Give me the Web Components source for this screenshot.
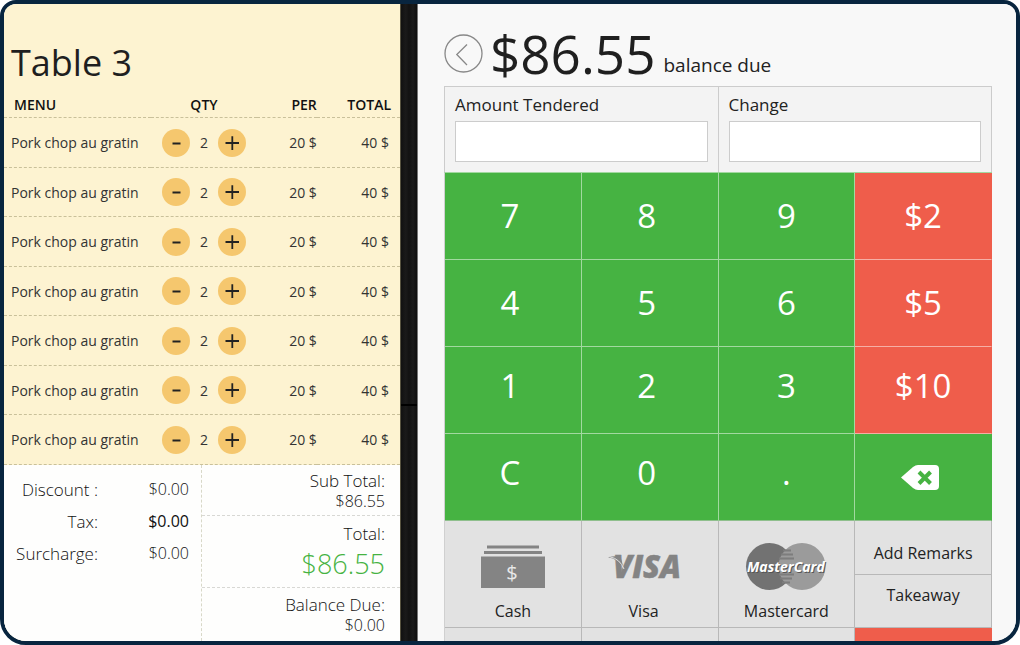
<!DOCTYPE html>
<html lang="en">
<head>
<meta charset="utf-8">
<meta name="viewport" content="width=device-width, initial-scale=1">
<title>Table 3 - Payment</title>
<style>
  body { margin: 0; background: #fff; font-family: "Open Sans", "Noto Sans", sans-serif; color: #222; }
</style>
</head>
<body>
<pos-screen>
  <order-bill slot="bill" heading="Table 3" lines="7"></order-bill>
  <payment-pane slot="payment"></payment-pane>
</pos-screen>

<script>
const define = (name, html, setup) => {
  const template = document.createElement('template');
  template.innerHTML = html;
  customElements.define(name, class extends HTMLElement {
    constructor() {
      super();
      this.attachShadow({ mode: 'open' }).append(template.content.cloneNode(true));
    }
    connectedCallback() { if (setup) setup(this, this.shadowRoot); }
  });
};

/* Device frame: bill, binding, payment */
define('pos-screen', `
<style>
  :host { display: grid; grid-template-columns: minmax(0, 396fr) 18px minmax(0, 598fr); min-height: 100vh;
    box-sizing: border-box; border: 4px solid #08253f; border-radius: 16px 16px 26px 26px; overflow: hidden; background: #f8f8f8; }
  .binding { box-sizing: border-box; border-left: 1px solid #56523f; border-right: 1px solid #777;
    background: linear-gradient(#000, #000) 0 63% / 100% 2px no-repeat, linear-gradient(90deg, #111, #1a1a1a 30%, #121212 50%, #1b1b1b 75%, #0e0e0e); }
</style>
<slot name="bill"></slot>
<div class="binding"></div>
<slot name="payment"></slot>`);

/* Round plus / minus stepper */
define('qty-stepper', `
<style>
  :host { display: flex; justify-content: center; align-items: center; gap: 8px; }
  button { width: 28px; height: 28px; padding: 0; border: 0; border-radius: 50%; background: #f5c76e; display: grid; place-items: center; }
  span { width: 12px; text-align: center; }
</style>
<button aria-label="Decrease"><svg width="16" height="16" viewBox="0 0 16 16"><path d="M4.500 8.500h8" stroke="#222" stroke-width="2"/></svg></button>
<span><slot></slot></span>
<button aria-label="Increase"><svg width="16" height="16" viewBox="0 0 16 16"><path d="M1.500 8H15M8.300 1.200V15" stroke="#222" stroke-width="1.800"/></svg></button>`);

define('bill-amount', `
<style>
  :host { display: block; box-sizing: border-box; padding: 5px 15px 3px 0; text-align: right; font-size: 17px; line-height: 21px; font-weight: 300; color: #111; border-bottom: 1px dashed #d8d8d4; }
  :host([last]) { border-bottom: 0; padding-top: 6px; }
  :host([grand]) { padding-top: 7px; }
  .value { font-size: 16px; }
  :host([grand]) .value { font-size: 27px; line-height: 40px; color: #46b342; }
</style>
<div><slot></slot></div>
<div class="value"><slot name="value"></slot></div>`);

define('order-bill', `
<style>
  :host { display: flex; flex-direction: column; background: #fdf3d1; }
  h1 { margin: 0; padding: 30px 0 0 7px; font-size: 36px; line-height: 57px; font-weight: 400; color: #1f1f1f; }
  table { width: 100%; border-collapse: separate; border-spacing: 0; table-layout: fixed; font-size: 14px; color: #333; }
  th, td { box-sizing: border-box; padding: 0; border-bottom: 1px dashed #c9c09a; text-align: right; }
  th { height: 27px; font-weight: 600; color: #111; }
  td { height: 49px; }
  tr:nth-child(odd) td { height: 50px; }
  th:first-child { text-align: left; padding-left: 10px; }
  td:first-child { text-align: left; padding-left: 7px; }
  th:nth-child(2) { text-align: center; }
  th:last-child { padding-right: 9px; }
  td:last-child { padding-right: 11px; }
  .name { width: 37%; } .qty { width: 27%; } .per { width: 15%; }
  .summary { flex: 1; display: grid; grid-template-columns: minmax(0, 1fr) minmax(0, 1fr); background: #fefefd; }
  dl { margin: 0; padding: 8px 12px 0 0; display: grid; grid-template-columns: 94px 1fr; grid-auto-rows: 32px; align-items: center; text-align: right; font-size: 17px; font-weight: 300; color: #111; border-right: 1px dashed #d8d8c8; }
  dd { margin: 0; font-size: 16px; }
  .set { font-weight: 400; }
</style>
<h1></h1>
<table>
  <colgroup><col class="name"><col class="qty"><col class="per"><col></colgroup>
  <thead><tr><th>MENU</th><th>QTY</th><th>PER</th><th>TOTAL</th></tr></thead>
  <tbody></tbody>
</table>
<div class="summary">
  <dl>
    <dt>Discount :</dt><dd>$0.00</dd>
    <dt>Tax:</dt><dd class="set">$0.00</dd>
    <dt>Surcharge:</dt><dd>$0.00</dd>
  </dl>
  <div>
    <bill-amount>Sub Total:<span slot="value">$86.55</span></bill-amount>
    <bill-amount grand>Total:<span slot="value">$86.55</span></bill-amount>
    <bill-amount last>Balance Due:<span slot="value">$0.00</span></bill-amount>
  </div>
</div>`, (host, root) => {
  root.querySelector('h1').textContent = host.getAttribute('heading');
  const row = '<tr><td>Pork chop au gratin</td><td><qty-stepper>2</qty-stepper></td><td>20 $</td><td>40 $</td></tr>';
  root.querySelector('tbody').innerHTML = row.repeat(Number(host.getAttribute('lines')));
});

define('tender-field', `
<style>
  :host { display: block; padding: 7px 10px 10px; border-right: 1px solid #ccc; }
  label { display: block; font-size: 17px; line-height: 22px; }
  input { display: block; box-sizing: border-box; width: 100%; height: 41px; margin-top: 5px; padding: 0 10px; border: 1px solid #ccc; border-radius: 0; background: #fff; font: inherit; font-size: 17px; }
</style>
<label for="amount"></label><input id="amount" type="text">`, (host, root) => {
  root.querySelector('label').textContent = host.getAttribute('label');
});

define('pad-key', `
<style>
  :host { display: block; }
  button { box-sizing: border-box; width: 100%; height: 100%; padding: 0 var(--pull, 0) var(--lift, 0) 0; border: 0; border-right: 1px solid #a2d9a0; border-bottom: 1px solid #a2d9a0;
    background: #46b342; color: #fff; font: inherit; font-size: 33px; line-height: 44px; display: flex; justify-content: center; align-items: center; }
  :host([cash]) button { background: #ef5d4b; border-right-color: #ef5d4b; border-bottom-color: #f6aea5; }
  :host([edge]) button { border-right-color: #46b342; }
  :host([foot]) button { border-bottom-color: #8fbf8d; }
</style>
<button><slot></slot></button>`);

define('pay-option', `
<style>
  :host { display: block; }
  button { box-sizing: border-box; width: 100%; height: 100%; padding: 19px var(--pull, 0) 5px 0; border: 0; border-right: 1px solid #b8b8b8; border-bottom: 1px solid #b8b8b8;
    background: #e2e2e2; color: #222; font: inherit; font-size: 16px; line-height: 22px; display: flex; flex-direction: column; justify-content: space-between; align-items: center; }
  ::slotted(svg) { display: block; height: 52px; }
</style>
<button><slot name="logo"></slot><span><slot></slot></span></button>`);

define('payment-pane', `
<style>
  :host { display: flex; flex-direction: column; padding: 0 24px 0 26px; background: #f8f8f8; }
  header { display: flex; align-items: center; gap: 7px; height: 82px; padding-top: 17px; box-sizing: border-box; }
  .back { width: 39px; height: 39px; padding: 0; border: 0; background: none; }
  .back svg { display: block; }
  .due { margin: 0; display: flex; align-items: flex-end; gap: 8px; font-size: 19px; line-height: 50px; font-weight: 400; color: #222; }
  .due strong { font-size: 53px; line-height: 72px; font-weight: 400; color: #1f1f1f; }
  .tender { display: grid; grid-template-columns: 1fr 1fr; height: 87px; box-sizing: border-box; border: 1px solid #ccc; border-right: 0; border-bottom-color: #a2d9a0; background: #f3f3f3; }
  .keys, .pay, .more { display: grid; grid-template-columns: repeat(4, minmax(0, 1fr)); border-left: 1px solid #d0d0d0; }
  .keys { grid-auto-rows: 87px; }
  .pay { grid-auto-rows: 107px; }
  .keys > :nth-child(4n+1), .keys > :nth-child(4n+2) { --pull: 6px; }
  .pay > :nth-child(2) { --pull: 12px; }
  .keys > [edge] { --pull: 6px; }
  .keys > :nth-child(n+9):not([edge]) { --lift: 8px; }
  .notes { display: grid; grid-template-rows: 1fr 1fr; }
  .notes button { border: 0; border-right: 1px solid #b8b8b8; border-bottom: 1px solid #b8b8b8; background: #e2e2e2; padding: 0; color: #222; font: inherit; font-size: 16px; }
  .notes button:first-child { padding-top: 12px; }
  .notes button:last-child { padding-bottom: 12px; }
  .more { flex: 1; }
  .more div { background: #e2e2e2; border-right: 1px solid #b8b8b8; }
  .more div:last-child { background: #ef5d4b; border-right-color: #ef5d4b; }
</style>
<header>
  <button class="back" aria-label="Back"><svg width="39" height="39" viewBox="0 0 39 39" fill="none" stroke="#888"><circle cx="19.500" cy="19.500" r="18.500" stroke-width="1.300"/><path d="M23 10.500 12.800 20.500 23 31" stroke-width="1.300"/></svg></button>
  <p class="due"><strong>$86.55</strong><span>balance due</span></p>
</header>
<div class="tender">
  <tender-field label="Amount Tendered"></tender-field>
  <tender-field label="Change"></tender-field>
</div>
<div class="keys">
  <pad-key>7</pad-key><pad-key>8</pad-key><pad-key>9</pad-key><pad-key cash>$2</pad-key>
  <pad-key>4</pad-key><pad-key>5</pad-key><pad-key>6</pad-key><pad-key cash>$5</pad-key>
  <pad-key>1</pad-key><pad-key>2</pad-key><pad-key>3</pad-key><pad-key cash>$10</pad-key>
  <pad-key foot>C</pad-key><pad-key foot>0</pad-key><pad-key foot>.</pad-key>
  <pad-key foot edge><svg role="img" aria-label="Backspace" width="38" height="25" viewBox="0 0 38 25"><path d="M0 12.500 12 2Q14.500 0 17 0H34Q38 0 38 4V21Q38 25 34 25H17Q14.500 25 12 23Z" fill="#fff"/><path d="M18 7 29.500 18.500M29.500 7 18 18.500" stroke="#46b342" stroke-width="4"/></svg></pad-key>
</div>
<div class="pay">
  <pay-option>Cash
    <svg slot="logo" width="64" height="52" viewBox="0 0 64 52"><path d="M6 5.500h52v3H6zM3 11h58v3H3zM0 16.500h64V48H0z" fill="#848484"/><text x="31" y="39.500" text-anchor="middle" font-family="Open Sans" font-size="20" fill="#e8e8e8">$</text></svg>
  </pay-option>
  <pay-option>Visa
    <svg slot="logo" width="76" height="52" viewBox="0 0 76 52"><text x="7" y="37.500" font-family="Open Sans" font-weight="800" font-style="italic" font-size="31" fill="#848484" stroke="#848484" stroke-width=".5">VISA</text><path d="M2 17.200Q9 15.500 14 17Q16 20 17 27Q12 19 2 17.200Z" fill="#848484"/><path d="M4 16.800Q14 19 18 29" fill="none" stroke="#e2e2e2" stroke-width="1"/></svg>
  </pay-option>
  <pay-option>Mastercard
    <svg slot="logo" width="82" height="52" viewBox="0 0 82 52"><circle cx="24.500" cy="26.500" r="23.500" fill="#727272"/><circle cx="57" cy="26.500" r="23.500" fill="#9b9b9b"/><path d="M38 10.500h8M36 14.500h12M34 18.500h15M34 34.500h15M35 38.500h12M37 42.500h8" stroke="#7d7d7d" stroke-width="2"/><g font-family="Open Sans" font-weight="700" font-style="italic" font-size="14"><text x="3" y="33" fill="#555">MasterCard</text><text x="2" y="32" fill="#fff">MasterCard</text></g></svg>
  </pay-option>
  <div class="notes"><button>Add Remarks</button><button>Takeaway</button></div>
</div>
<div class="more"><div></div><div></div><div></div><div></div></div>`);
</script>
</body>
</html>
